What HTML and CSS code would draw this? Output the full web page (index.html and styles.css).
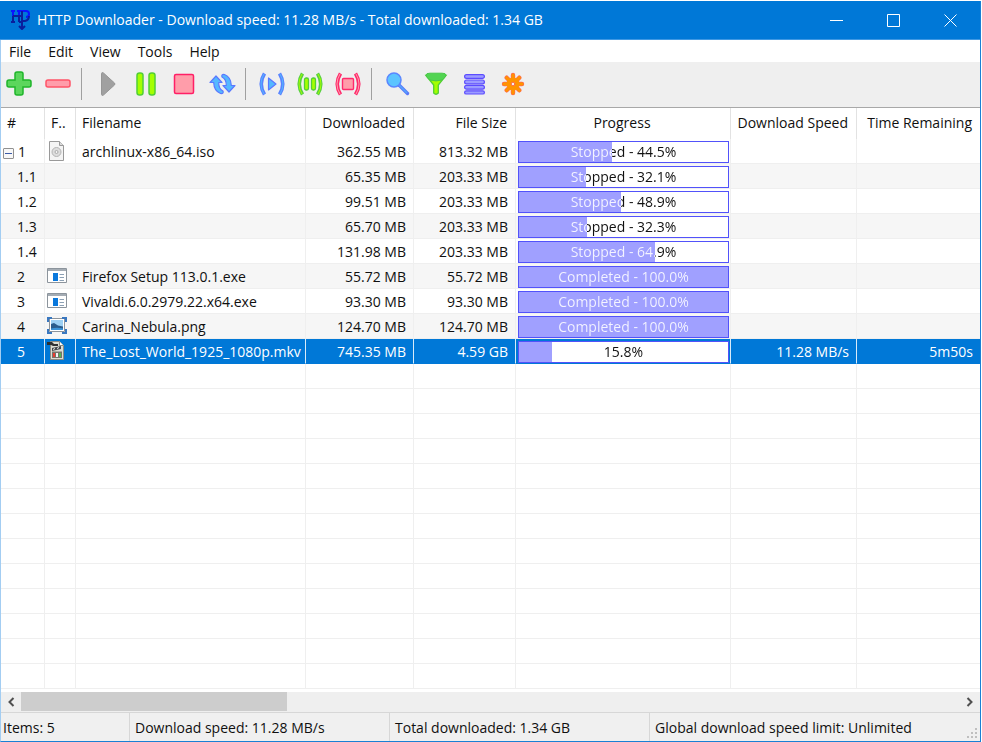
FILE: index.html
```html
<!DOCTYPE html>
<html lang="en">
<head>
    <meta charset="UTF-8">
    <meta name="viewport" content="width=device-width, initial-scale=1.0">
    <title>HTTP Downloader</title>
    <link rel="stylesheet" href="styles.css">
</head>
<body>
    <div class="window">
        <!-- Title bar -->
        <header class="title-bar">
            <svg class="app-icon" viewBox="0 0 20 20" fill="none" stroke-width="2">
                <path stroke="#0a14ff" d="M2 0v7M8 0v7M0 1h4M6 1h9q3 0 3 3t-3 3"/>
                <path stroke="#0a1e9c" d="M2 6v7M8 6v6M0 12h4M2 6h9M11 1v17M8 12h3M11 11h3q4-1 4-5M8 16l3 3 3-3"/>
            </svg>
            <h1 class="title">HTTP Downloader - Download speed: 11.28 MB/s - Total downloaded: 1.34 GB</h1>
            <button class="window-button" aria-label="Minimize"><svg viewBox="0 0 13 13"><path d="M0 6.5h13"/></svg></button>
            <button class="window-button" aria-label="Maximize"><svg viewBox="0 0 13 13"><path d="M.5.5h12v12H.5z"/></svg></button>
            <button class="window-button" aria-label="Close"><svg viewBox="0 0 13 13"><path d="M.5.5l12 12M12.5.5l-12 12"/></svg></button>
        </header>

        <!-- Menu -->
        <nav class="menu">
            <button>File</button>
            <button>Edit</button>
            <button>View</button>
            <button>Tools</button>
            <button>Help</button>
        </nav>

        <!-- Toolbar -->
        <div class="toolbar">
            <button aria-label="Add"><svg viewBox="0 0 26 26"><path fill="#5cd65c" stroke="#1fb52a" stroke-width="1.5" d="M10 1h4q2 0 2 2v6h6q2 0 2 2v3q0 2-2 2h-6v6q0 2-2 2h-4q-2 0-2-2v-6H2q-2 0-2-2v-3q0-2 2-2h6V3q0-2 2-2z"/></svg></button>
            <button aria-label="Remove"><svg viewBox="0 0 26 26"><rect x="1" y="9" width="24" height="7" rx="2" fill="#ff9daa" stroke="#ff5468" stroke-width="1.5"/></svg></button>
            <span class="separator"></span>
            <button aria-label="Start"><svg viewBox="0 0 26 26"><path fill="#a0a0a0" stroke="#969696" d="M6.500 2.500q0-1.500 2-.5L19.500 12q.8 1 0 2L8.500 24q-2 1-2-.5z"/></svg></button>
            <button aria-label="Pause"><svg viewBox="0 0 26 26" fill="#a4ff00" stroke="#52cf36" stroke-width="1.5"><rect x="4" y="2" width="6" height="22" rx="2.5"/><rect x="16" y="2" width="6" height="22" rx="2.5"/></svg></button>
            <button aria-label="Stop"><svg viewBox="0 0 26 26"><rect x="3.5" y="3.5" width="19" height="19" rx="1.5" fill="#ff9daa" stroke="#ff1f66" stroke-width="1.5"/></svg></button>
            <button aria-label="Restart"><svg viewBox="0 0 26 26" fill="#54b8ff" stroke="#5a78ff" stroke-width="1.200" stroke-linejoin="round"><path d="M7 5l6 6.500H9.700q0 6.500 4.300 8.500 1 3-2.500 2.500Q5 20 4.700 11.500H1z"/><path d="M20 21l-6-6.500h3.300q0-6.500-4.300-8.500-1-3 2.500-2.500Q22 6 22.300 14.500H26z"/></svg></button>
            <span class="separator"></span>
            <button aria-label="Start all"><svg viewBox="0 0 26 26" fill="none"><path d="M5.500 2.500q-6.500 10.500 0 21M20.500 2.500q6.500 10.500 0 21" stroke="#5a82ff" stroke-width="3.600"/><path d="M5 3q-6 10 0 20M21 3q6 10 0 20" stroke="#54b8ff"/><path fill="#54b8ff" stroke="#5a78ff" stroke-width="1.2" stroke-linejoin="round" d="M9.500 7v12l7.500-6z"/></svg></button>
            <button aria-label="Pause all"><svg viewBox="0 0 26 26" fill="none"><path d="M5.500 2.500q-6.500 10.500 0 21M20.500 2.500q6.500 10.500 0 21" stroke="#58d040" stroke-width="3.600"/><path d="M5 3q-6 10 0 20M21 3q6 10 0 20" stroke="#a4ff00"/><g fill="#a4ff00" stroke="#52cf36" stroke-width="1.3"><rect x="7.500" y="7" width="4" height="12" rx="1.7"/><rect x="14.500" y="7" width="4" height="12" rx="1.7"/></g></svg></button>
            <button aria-label="Stop all"><svg viewBox="0 0 26 26" fill="none"><path d="M5.500 2.500q-6.500 10.500 0 21M20.500 2.500q6.500 10.500 0 21" stroke="#ff2a6c" stroke-width="3.600"/><path d="M5 3q-6 10 0 20M21 3q6 10 0 20" stroke="#ff9daa"/><rect x="7.500" y="7.500" width="11" height="11" rx="1" fill="#ff9daa" stroke="#ff2a6c" stroke-width="1.4"/></svg></button>
            <span class="separator"></span>
            <button aria-label="Search"><svg viewBox="0 0 26 26"><path d="M14 14l8.500 8.500" stroke="#5878f8" stroke-width="3.4" stroke-linecap="round"/><path d="M14 14l8 8" stroke="#54a8ff" stroke-width="1.4"/><circle cx="9" cy="9" r="7" fill="#5cc4ff" stroke="#5a86ff" stroke-width="1.5"/></svg></button>
            <button aria-label="Filter"><svg viewBox="0 0 26 26"><path d="M3 4.500l7.700 9.500v8q2.300 2.500 4.600 0v-8L23 4.500z" fill="#a4ff00" stroke="#52cf36" stroke-width="1.3"/><path d="M3 4q0-1.800 4-1.800h12q4 0 4 1.800 0 2-4 5-6 1.800-12 0Q3 6 3 4z" fill="#52d452" stroke="#48c848"/></svg></button>
            <button aria-label="Options"><svg viewBox="0 0 26 26" fill="#9c9cff" stroke="#5c4cff" stroke-width="1.2"><rect x="3.600" y="3.600" width="19.800" height="3.800" rx="1.900"/><rect x="3.600" y="9" width="19.800" height="3.800" rx="1.900"/><rect x="3.600" y="14.400" width="19.800" height="3.800" rx="1.900"/><rect x="3.600" y="19.800" width="19.800" height="3.200" rx="1.600"/></svg></button>
            <button aria-label="Settings"><svg viewBox="0 0 26 26" fill="none" stroke-linecap="round"><path d="M14 4v18M5 13h18M7.700 6.700l12.600 12.600M20.300 6.700L7.700 19.300" stroke="#ff6a4c" stroke-width="4.400"/><circle cx="14" cy="13" r="6.500" fill="#ff9400"/><path d="M14 4v18M5 13h18M7.700 6.700l12.600 12.600M20.300 6.700L7.700 19.300" stroke="#ff9400" stroke-width="3"/><circle cx="14" cy="13" r="1.800" fill="#efefef" stroke="#ff6a4c"/></svg></button>
        </div>

        <!-- Downloads -->
        <main class="list" id="list">
            <table>
                <colgroup>
                    <col class="col-number"><col class="col-type"><col class="col-name"><col class="col-downloaded">
                    <col class="col-size"><col class="col-progress"><col class="col-speed"><col>
                </colgroup>
                <thead>
                    <tr>
                        <th>#</th>
                        <th>F..</th>
                        <th>Filename</th>
                        <th class="right">Downloaded</th>
                        <th class="right">File Size</th>
                        <th class="center">Progress</th>
                        <th class="right">Download Speed</th>
                        <th class="right">Time Remaining</th>
                    </tr>
                </thead>
                <tbody id="rows">
                    <tr>
                        <td class="number parent"><button class="toggle" aria-label="Collapse"></button>1</td>
                        <td class="type"><svg viewBox="0 0 20 20"><path d="M2.500.5h10l4 4v15h-14z" fill="#f4f4f4" stroke="#999"/><path d="M12.500.5v4h4" fill="#ddd" stroke="#999"/><circle cx="9.500" cy="11" r="4.500" fill="#ddd" stroke="#b4b4b4"/><circle cx="9.500" cy="11" r="1.500" fill="#f4f4f4" stroke="#aaa"/></svg></td>
                        <td>archlinux-x86_64.iso</td>
                        <td class="right">362.55 MB</td>
                        <td class="right">813.32 MB</td>
                        <td class="progress"><div class="bar" style="--value: 44.5%"><span>Stopped - 44.5%</span></div></td>
                        <td></td>
                        <td></td>
                    </tr>
                    <tr>
                        <td class="number">1.1</td>
                        <td></td>
                        <td></td>
                        <td class="right">65.35 MB</td>
                        <td class="right">203.33 MB</td>
                        <td class="progress"><div class="bar" style="--value: 32.1%"><span>Stopped - 32.1%</span></div></td>
                        <td></td>
                        <td></td>
                    </tr>
                    <tr>
                        <td class="number">1.2</td>
                        <td></td>
                        <td></td>
                        <td class="right">99.51 MB</td>
                        <td class="right">203.33 MB</td>
                        <td class="progress"><div class="bar" style="--value: 48.9%"><span>Stopped - 48.9%</span></div></td>
                        <td></td>
                        <td></td>
                    </tr>
                    <tr>
                        <td class="number">1.3</td>
                        <td></td>
                        <td></td>
                        <td class="right">65.70 MB</td>
                        <td class="right">203.33 MB</td>
                        <td class="progress"><div class="bar" style="--value: 32.3%"><span>Stopped - 32.3%</span></div></td>
                        <td></td>
                        <td></td>
                    </tr>
                    <tr>
                        <td class="number">1.4</td>
                        <td></td>
                        <td></td>
                        <td class="right">131.98 MB</td>
                        <td class="right">203.33 MB</td>
                        <td class="progress"><div class="bar" style="--value: 64.9%"><span>Stopped - 64.9%</span></div></td>
                        <td></td>
                        <td></td>
                    </tr>
                    <tr>
                        <td class="number">2</td>
                        <td class="type"><svg viewBox="0 0 20 20"><path d="M.5 2.500h19v14H.5z" fill="#fff" stroke="#8c949c"/><path d="M1 3h18v2H1z" fill="#a4acb4"/><path d="M6 7h5v8H6z" fill="#0a78dc"/><path d="M12.500 8.500H17M12.500 11.500H17M12.500 14.500H17" stroke="#8ca0b4"/></svg></td>
                        <td>Firefox Setup 113.0.1.exe</td>
                        <td class="right">55.72 MB</td>
                        <td class="right">55.72 MB</td>
                        <td class="progress"><div class="bar" style="--value: 100%"><span>Completed - 100.0%</span></div></td>
                        <td></td>
                        <td></td>
                    </tr>
                    <tr>
                        <td class="number">3</td>
                        <td class="type"><svg viewBox="0 0 20 20"><path d="M.5 2.500h19v14H.5z" fill="#fff" stroke="#8c949c"/><path d="M1 3h18v2H1z" fill="#a4acb4"/><path d="M6 7h5v8H6z" fill="#0a78dc"/><path d="M12.500 8.500H17M12.500 11.500H17M12.500 14.500H17" stroke="#8ca0b4"/></svg></td>
                        <td>Vivaldi.6.0.2979.22.x64.exe</td>
                        <td class="right">93.30 MB</td>
                        <td class="right">93.30 MB</td>
                        <td class="progress"><div class="bar" style="--value: 100%"><span>Completed - 100.0%</span></div></td>
                        <td></td>
                        <td></td>
                    </tr>
                    <tr>
                        <td class="number">4</td>
                        <td class="type"><svg viewBox="0 0 20 20"><path d="M2.500 2.500h15v13h-15z" fill="#fff" stroke="#8c949c"/><path d="M4 4h12v10H4z" fill="#9cd0f4"/><path d="M4 8l3-1 4 2.500 5 1V14H4z" fill="#2a5c8c"/><path d="M4 12.500q6-1.500 12 0V14H4z" fill="#3c94d8"/><path d="M1 6V2h4M15 2h4v4M19 13v4h-4M5 17H1v-4" fill="none" stroke="#3a78c0" stroke-width="2"/></svg></td>
                        <td>Carina_Nebula.png</td>
                        <td class="right">124.70 MB</td>
                        <td class="right">124.70 MB</td>
                        <td class="progress"><div class="bar" style="--value: 100%"><span>Completed - 100.0%</span></div></td>
                        <td></td>
                        <td></td>
                    </tr>
                    <tr class="selected">
                        <td class="number">5</td>
                        <td class="type"><svg viewBox="0 0 20 20"><path d="M3.500.5h9l4 4v14h-13z" fill="#dcdcd4" stroke="#8c8c84"/><path d="M12.500.5v4h4" fill="#fff" stroke="#8c8c84"/><path d="M0 1h5l2 2h4v2H6L4 4H0z" fill="#303030"/><path d="M5 7l9-2v3L5 10z" fill="#44484c"/><path d="M6 8.500l2-1M10 7.500l2-1" stroke="#eee"/><path d="M5 10.500h10V17H5z" fill="#74746c"/><path d="M6 12h2v4H6z" fill="#e83c30"/><path d="M9 12h2v4H9z" fill="#f4f4f4"/><path d="M12 12h2v4h-2z" fill="#54b454"/></svg></td>
                        <td>The_Lost_World_1925_1080p.mkv</td>
                        <td class="right">745.35 MB</td>
                        <td class="right">4.59 GB</td>
                        <td class="progress"><div class="bar" style="--value: 15.8%"><span>15.8%</span></div></td>
                        <td class="right">11.28 MB/s</td>
                        <td class="right">5m50s</td>
                    </tr>
                </tbody>
            </table>
        </main>

        <!-- Horizontal scroll bar -->
        <div class="scroll-bar">
            <button aria-label="Scroll left"><svg viewBox="0 0 8 10"><path d="M6.500 1l-4 4 4 4"/></svg></button>
            <div class="track"><div class="thumb"></div></div>
            <button aria-label="Scroll right"><svg viewBox="0 0 8 10"><path d="M1.500 1l4 4-4 4"/></svg></button>
        </div>

        <!-- Status bar -->
        <footer class="status-bar">
            <span>Items: 5</span>
            <span>Download speed: 11.28 MB/s</span>
            <span>Total downloaded: 1.34 GB</span>
            <span>Global download speed limit: Unlimited</span>
            <svg class="grip" viewBox="0 0 11 11" fill="#bfbfbf"><path d="M8 0h2v2H8zM4 4h2v2H4zM8 4h2v2H8zM0 8h2v2H0zM4 8h2v2H4zM8 8h2v2H8z"/></svg>
        </footer>
    </div>

    <script>
        const list = document.getElementById('list');
        const rows = document.getElementById('rows');

        // Fill the rest of the list with empty rows so the grid lines go on
        const rowHeight = rows.rows[0].offsetHeight;
        const free = list.clientHeight - list.firstElementChild.offsetHeight;
        for (let i = 0; i < Math.floor(free / rowHeight); i++) {
            const row = rows.insertRow();
            row.className = 'empty';
            for (let j = 0; j < 8; j++) {
                row.insertCell();
            }
        }
    </script>
</body>
</html>
```

FILE: styles.css
```css
* {
    box-sizing: border-box;
}
body {
    margin: 0;
    padding: 1px 1px 0 0;
    height: 100vh;
    background: #fff;
    color: #101010;
    font: 14px/20px "Open Sans", "Noto Sans", sans-serif;
}
button {
    padding: 0;
    border: 0;
    background: none;
    color: inherit;
    font: inherit;
}
svg {
    display: block;
}
.window {
    display: flex;
    flex-direction: column;
    height: 100%;
    border: 1px solid #1a80d4;
    border-top: 0;
    border-left-color: #a3cdf2;
}

/* Title bar */
.title-bar {
    display: flex;
    align-items: center;
    height: 39px;
    margin-left: -1px;
    padding: 0 1px 0 11px;
    border-bottom: 1px solid #3f98e3;
    background: #0078d7;
    color: #fff;
}
.app-icon {
    width: 20px;
    height: 20px;
}
.title {
    flex: 1;
    margin: 0 0 0 6px;
    font-size: 14px;
    font-weight: normal;
    white-space: nowrap;
}
.window-button {
    display: flex;
    align-items: center;
    justify-content: center;
    width: 57px;
    height: 100%;
}
.window-button svg {
    width: 13px;
    height: 13px;
    fill: none;
    stroke: #fff;
}

/* Menu */
.menu {
    display: flex;
    height: 22px;
}
.menu button {
    padding: 2px 9px 0 8px;
}

/* Toolbar */
.toolbar {
    display: flex;
    align-items: center;
    height: 46px;
    padding-bottom: 2px;
    background: #efefef;
    border-bottom: 1px solid #a8a8a8;
}
.toolbar button {
    display: flex;
    justify-content: center;
    width: 38px;
}
.toolbar svg {
    width: 26px;
    height: 26px;
    overflow: visible;
}
.separator {
    width: 1px;
    height: 32px;
    margin: 0 7px 0 4px;
    background: #a0a0a0;
}

/* Downloads */
.list {
    flex: 1;
    min-height: 0;
    overflow: hidden;
}
table {
    width: 100%;
    table-layout: fixed;
    border-spacing: 0;
}
.col-number {
    width: 44px;
}
.col-type {
    width: 31px;
}
.col-name {
    width: 230px;
}
.col-downloaded {
    width: 108px;
}
.col-size {
    width: 102px;
}
.col-progress {
    width: 215px;
}
.col-speed {
    width: 126px;
}
th {
    height: 31px;
    padding: 0 8px 2px 6px;
    border-right: 1px solid #e2e2e2;
    font-weight: normal;
    text-align: left;
    white-space: nowrap;
}
td {
    height: 25px;
    padding: 2px 7px 0 6px;
    border-right: 1px solid #efefef;
    border-bottom: 1px solid #efefef;
    white-space: nowrap;
}
th:last-child, td:last-child {
    border-right: 0;
}
tbody tr:nth-child(even) {
    background: #f6f6f6;
}
tbody tr.empty {
    background: #fff;
}
tbody tr.selected {
    background: #0078d7;
    color: #fff;
}
.selected td {
    border-right-color: #d9ebf9;
    border-bottom-color: #0078d7;
}
.right {
    text-align: right;
}
.center {
    text-align: center;
}
.number {
    padding: 2px 0 0 16px;
}
.parent {
    padding-left: 2px;
}
.toggle {
    width: 11px;
    height: 11px;
    margin-right: 4px;
    border: 1px solid #919191;
    border-radius: 1px;
    background: linear-gradient(#3c5ca8, #3c5ca8) center / 7px 1px no-repeat #f8f8f8;
    vertical-align: -1px;
}
.type {
    padding: 0 0 0 2px;
}
.type svg {
    width: 20px;
    height: 20px;
}
.progress {
    padding: 1px 1px 0 2px;
}
.bar {
    height: 22px;
    border: 1px solid #5252fa;
    background: linear-gradient(to right, #a0a0ff var(--value), #fff var(--value)) padding-box;
    line-height: 20px;
    text-align: center;
}
/* Label turns white where the filled part is behind it */
.bar span {
    display: block;
    background: linear-gradient(to right, #f4f4ff var(--value), #101010 var(--value));
    -webkit-background-clip: text;
    background-clip: text;
    color: transparent;
}

/* Scroll bar */
.scroll-bar {
    display: flex;
    height: 20px;
    background: #efefef;
}
.scroll-bar button {
    display: flex;
    align-items: center;
    justify-content: center;
    width: 20px;
}
.scroll-bar svg {
    width: 8px;
    height: 10px;
    fill: none;
    stroke: #505050;
    stroke-width: 2;
}
.track {
    flex: 1;
}
.thumb {
    width: 28.3%;
    height: 19px;
    background: #cdcdcd;
}

/* Status bar */
.status-bar {
    display: flex;
    align-items: center;
    height: 29px;
    border-top: 1px solid #d7d7d7;
    background: #f0f0f0;
}
.status-bar span {
    width: 260px;
    padding: 5px 5px 3px;
    border-right: 1px solid #d7d7d7;
}
.status-bar span:first-child {
    width: 129px;
    padding-left: 2px;
}
.status-bar span:nth-child(4) {
    flex: 1;
    border-right: 0;
}
.grip {
    align-self: flex-end;
    width: 11px;
    height: 11px;
    margin: 0 2px 2px 0;
}
```
